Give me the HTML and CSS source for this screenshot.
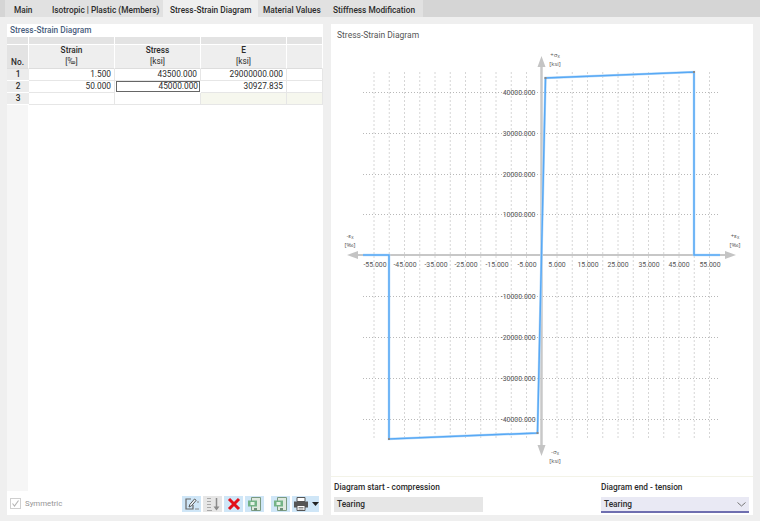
FILE: index.html
```html
<!DOCTYPE html>
<html lang="en">
<head>
    <meta charset="UTF-8">
    <title>Stress-Strain Diagram</title>
    <link rel="stylesheet" href="styles.css">
</head>
<body>
    <div class="tabs">
        <div class="tab tab-main">Main</div>
        <div class="tab tab-iso">Isotropic | Plastic (Members)</div>
        <div class="tab tab-diagram active">Stress-Strain Diagram</div>
        <div class="tab tab-values">Material Values</div>
        <div class="tab tab-stiff">Stiffness Modification</div>
    </div>

    <div class="content">
        <div class="panel left-panel">
            <div class="panel-title">Stress-Strain Diagram</div>
            <div class="grid">
                <div class="strip"></div><div class="strip"></div><div class="strip"></div><div class="strip"></div><div class="strip"></div>

                <div class="head no-head">No.</div>
                <div class="head"><span>Strain</span><span>[‰]</span></div>
                <div class="head"><span>Stress</span><span>[ksi]</span></div>
                <div class="head"><span>E</span><span>[ksi]</span></div>
                <div class="head"></div>

                <div class="no">1</div>
                <div class="cell">1.500</div>
                <div class="cell">43500.000</div>
                <div class="cell">29000000.000</div>
                <div class="cell"></div>

                <div class="no">2</div>
                <div class="cell">50.000</div>
                <div class="cell selected">45000.000</div>
                <div class="cell">30927.835</div>
                <div class="cell"></div>

                <div class="no">3</div>
                <div class="cell"></div>
                <div class="cell"></div>
                <div class="cell locked"></div>
                <div class="cell locked"></div>
            </div>
            <div class="no-rest"></div>
            <div class="footer">
                <label class="symmetric"><span class="checkbox"><svg width="9" height="9" viewBox="0 0 9 9"><path d="M1.500 4.500l2 2.500L7.500 1.500" fill="none" stroke="#b5b5b5" stroke-width="1.100"/></svg></span>Symmetric</label>
                <div class="tools">
                    <div class="tool"><svg width="16" height="16" viewBox="0 0 16 16"><path d="M7 3H2v10h7V9" fill="none" stroke="#666" stroke-width="1.200"/><path d="M5 11l.8-2.500L10.500 3l1.700 1.300-4.700 5.500z" fill="#eef6fc" stroke="#555"/><path d="M11 13h4M13 6h2" stroke="#888"/></svg></div>
                    <div class="tool off"><svg width="16" height="16" viewBox="0 0 16 16"><path d="M2 2.500h4M2 5.500h4M2 8.500h4M2 11.500h4M2 14.500h5" stroke="#a8a8a8" stroke-width="1.100"/><path d="M11.500 2v11" stroke="#8a8a8a" stroke-width="1.500"/><path d="M8.500 10.500l3 4 3-4z" fill="#8a8a8a"/></svg></div>
                    <div class="tool"><svg width="16" height="16" viewBox="0 0 16 16"><path d="M3 3l10 10M13 3L3 13" stroke="#e2101a" stroke-width="3"/></svg></div>
                    <div class="tool"><svg width="16" height="16" viewBox="0 0 16 16"><path d="M4.500 1.500h9v13h-9z" fill="#dfe9df" stroke="#7a9a80"/><path d="M1 4.500h9v6H1z" fill="#74b386"/><path d="M3.500 6h4v3h-4z" fill="#e4f2e6"/><path d="M7 12h3v2.500H7z" fill="#6f8f78"/></svg></div>
                    <div class="tool gap"><svg width="16" height="16" viewBox="0 0 16 16"><path d="M4.500 1.500h9v13h-9z" fill="#dfe9df" stroke="#7a9a80"/><path d="M1 4.500h9v6H1z" fill="#74b386"/><path d="M3.500 6h4v3h-4z" fill="#e4f2e6"/><path d="M7 12h3v2.500H7z" fill="#6f8f78"/></svg></div>
                    <div class="tool wide"><svg width="16" height="16" viewBox="0 0 16 16"><path d="M4 1.500h8v4H4z" fill="#fff" stroke="#555"/><path d="M1 5.500h14v6H1z" fill="#555"/><path d="M4 9.500h8v5H4z" fill="#fff" stroke="#555"/><path d="M5.500 11.500h5M5.500 13h5" stroke="#888"/></svg><svg class="caret" width="7" height="4" viewBox="0 0 7 4"><path d="M0 0h7L3.500 4z" fill="#222"/></svg></div>
                </div>
            </div>
        </div>

        <div class="right-col">
            <div class="panel chart-panel">
                <div class="chart-title">Stress-Strain Diagram</div>
                <svg class="chart" width="422" height="452" viewBox="331 24 422 452">
                    <g class="grid-v">
                        <path d="M374 72V440M389.250 72V440M404.500 72V440M419.750 72V440M435 72V440M450.250 72V440M465.500 72V440M480.750 72V440M496 72V440M511.250 72V440M526.500 72V440M557 72V440M572.250 72V440M587.500 72V440M602.750 72V440M618 72V440M633.250 72V440M648.500 72V440M663.750 72V440M679 72V440M694.250 72V440M709.500 72V440"/>
                    </g>
                    <g class="grid-h">
                        <path d="M363 92.500H720M363 133.500H720M363 174.500H720M363 214.500H720M363 296.500H720M363 337.500H720M363 378.500H720M363 419.500H720"/>
                    </g>
                    <g class="axis">
                        <path d="M541.500 64V448"/>
                        <path class="axis-thin" d="M356 255H727"/>
                        <path class="head-fill" d="M541.500 56l-4 11h8zM541.500 456l-4-11h8zM347 255l11-4v8zM736 255l-11-4v8z"/>
                    </g>
                    <path class="curve-glow" d="M363 255H389V439L537.500 433L545.500 78L694 72V255H720"/>
                    <path class="curve" d="M363 255H389V439L537.500 433L545.500 78L694 72V255H720"/>
                    <path class="vertex" d="M388 438h2v2h-2zM536.500 432h2v2h-2zM544.500 77h2v2h-2zM693 71h2v2h-2z"/>
                    <g class="ticks-x">
                        <text x="375" y="267">-55.000</text>
                        <text x="405" y="267">-45.000</text>
                        <text x="436" y="267">-35.000</text>
                        <text x="466" y="267">-25.000</text>
                        <text x="497" y="267">-15.000</text>
                        <text x="527" y="267">-5.000</text>
                        <text x="557" y="267">5.000</text>
                        <text x="588" y="267">15.000</text>
                        <text x="618" y="267">25.000</text>
                        <text x="649" y="267">35.000</text>
                        <text x="679" y="267">45.000</text>
                        <text x="710" y="267">55.000</text>
                    </g>
                    <g class="ticks-y">
                        <text x="535.500" y="95">40000.000</text>
                        <text x="535.500" y="136">30000.000</text>
                        <text x="535.500" y="177">20000.000</text>
                        <text x="535.500" y="217">10000.000</text>
                        <text x="535.500" y="299">-10000.000</text>
                        <text x="535.500" y="340">-20000.000</text>
                        <text x="535.500" y="381">-30000.000</text>
                        <text x="535.500" y="422">-40000.000</text>
                    </g>
                    <g class="axis-labels">
                        <text x="555" y="57">+σ<tspan class="sub" dy="1">x</tspan></text>
                        <text x="555" y="66">[ksi]</text>
                        <text x="555" y="454">-σ<tspan class="sub" dy="1">x</tspan></text>
                        <text x="555" y="463">[ksi]</text>
                        <text x="350" y="238">-ε<tspan class="sub" dy="1">x</tspan></text>
                        <text x="350" y="247">[‰]</text>
                        <text x="735" y="238">+ε<tspan class="sub" dy="1">x</tspan></text>
                        <text x="735" y="247">[‰]</text>
                    </g>
                </svg>
            </div>
            <div class="panel ends">
                <div class="end-field">
                    <div class="end-label">Diagram start - compression</div>
                    <div class="end-value">Tearing</div>
                </div>
                <div class="end-field end-right">
                    <div class="end-label">Diagram end - tension</div>
                    <div class="end-value select">Tearing<svg width="9" height="5" viewBox="0 0 9 5"><path d="M.5.500l4 3.500 4-3.500" fill="none" stroke="#777"/></svg></div>
                </div>
            </div>
        </div>
    </div>
</body>
</html>
```

FILE: styles.css
```css
* {
    box-sizing: border-box;
}

body {
    margin: 0;
    width: 760px;
    height: 521px;
    overflow: hidden;
    background-color: #efefef;
    color: #2b2b2b;
    font-family: Roboto, "Noto Sans", sans-serif;
    font-size: 8.3px;
}

.tabs {
    display: flex;
    height: 17px;
    background-color: #d5d5d5;
    padding-left: 5px;
}

.tab {
    height: 17px;
    padding-top: 3px;
    line-height: 14px;
    white-space: nowrap;
    background-color: #e1e1e1;
    font-weight: 500;
}

.tab-main {
    width: 42px;
    padding-left: 9px;
}

.tab-iso {
    width: 116px;
    padding-left: 5px;
}

.tab-diagram {
    width: 95px;
    padding-left: 7px;
}

.tab-values {
    width: 70px;
    padding-left: 5px;
}

.tab-stiff {
    width: 95px;
    padding-left: 5px;
}

.tab.active {
    background-color: #efefef;
    height: 24px;
}

.content {
    display: flex;
    gap: 8px;
    padding: 7px 7px 6px 7px;
    height: 504px;
}

.panel {
    background-color: #fff;
}

.left-panel {
    width: 316px;
    display: flex;
    flex-direction: column;
}

.panel-title {
    height: 13px;
    padding-left: 3px;
    line-height: 13px;
    color: #49607e;
    font-weight: 500;
}

.grid {
    display: grid;
    grid-template-columns: 22px 86px 86px 86px 36px;
    grid-template-rows: 8px 24px 12px 12px 12px;
}

.strip {
    background-color: #e3e3e3;
    border-right: 1px solid #fff;
    margin-bottom: 1px;
}

.head {
    background-color: #eeeeee;
    border-right: 1px solid #fff;
    border-bottom: 1px solid #ddd;
    display: flex;
    flex-direction: column;
    align-items: center;
    line-height: 11px;
    font-weight: 500;
}

.head span + span {
    font-weight: 400;
}

.no-head {
    justify-content: flex-end;
    background-color: #e3e3e3;
}

.no {
    background-color: #ececec;
    text-align: center;
    line-height: 11px;
    border-bottom: 1px solid #fff;
    font-weight: 500;
}

.cell {
    text-align: right;
    padding-right: 3px;
    line-height: 11px;
    border-right: 1px solid #e6e6e6;
    border-bottom: 1px solid #e6e6e6;
}

.cell.selected {
    border: 1px solid #666;
    margin: 0 1px 1px 1px;
    line-height: 9px;
    padding-right: 1px;
}

.cell.locked {
    background-color: #f6f7ee;
}

.no-rest {
    width: 21px;
    flex: 1;
    background-color: #f6f6f6;
}

.footer {
    height: 24px;
    display: flex;
    align-items: center;
    justify-content: space-between;
    padding: 1px 4px 0 3px;
}

.symmetric {
    display: flex;
    align-items: center;
    gap: 4px;
    color: #959595;
    font-size: 7.8px;
}

.checkbox {
    width: 11px;
    height: 11px;
    border: 1px solid #cfcfcf;
    display: flex;
    align-items: center;
    justify-content: center;
}

.tools {
    display: flex;
    gap: 2px;
}

.tool {
    width: 19px;
    height: 16px;
    background-color: #cfe6f7;
    display: flex;
    align-items: center;
    justify-content: center;
}

.tool.off {
    background-color: #e6e6e6;
}

.tool.gap {
    margin-left: 5px;
}

.tool.wide {
    width: 27px;
    gap: 3px;
    justify-content: flex-start;
    padding-left: 1px;
}

.right-col {
    width: 422px;
    display: flex;
    flex-direction: column;
}

.chart-panel {
    height: 453px;
    position: relative;
    border-bottom: 1px solid #f3f3e8;
}

.chart-title {
    position: absolute;
    top: 6px;
    left: 6px;
    color: #555;
    font-size: 8.5px;
}

.chart {
    display: block;
}

.grid-v path {
    fill: none;
    stroke: #d6d6d6;
    stroke-width: 1;
    stroke-dasharray: 2 2;
}

.grid-h path {
    fill: none;
    stroke: #b8b8b8;
    stroke-width: 1;
    stroke-dasharray: 1 2;
}

.axis path {
    fill: none;
    stroke: #c8c8c8;
    stroke-width: 2.500;
}

.axis .axis-thin {
    stroke: #b4b4b4;
    stroke-width: 1.500;
}

.axis .head-fill {
    fill: #c4c4c4;
    stroke: none;
}

.curve {
    fill: none;
    stroke: #58a9f5;
    stroke-width: 1.500;
}

.curve-glow {
    fill: none;
    stroke: #bcdcf9;
    stroke-width: 2.500;
}

.vertex {
    fill: #8a8a8a;
}

.chart text {
    font-family: Roboto, "Noto Sans", sans-serif;
    font-size: 6.900px;
    fill: #555;
}

.ticks-x text {
    text-anchor: middle;
}

.ticks-y text {
    text-anchor: end;
}

.chart .axis-labels text {
    font-family: "Open Sans", "Noto Sans", sans-serif;
    font-size: 6px;
    text-anchor: middle;
}

.chart .axis-labels .sub {
    font-size: 4.500px;
}

.ends {
    height: 38px;
    display: flex;
    justify-content: space-between;
    padding: 4px 4px 0 3px;
}

.end-field {
    width: 149px;
}

.end-right {
    width: 148px;
}

.end-label {
    line-height: 13px;
    margin-bottom: 3px;
    font-weight: 500;
}

.end-value {
    height: 15px;
    line-height: 15px;
    background-color: #e6e6e6;
    padding-left: 3px;
    font-weight: 500;
}

.end-value.select {
    height: 16px;
    display: flex;
    justify-content: space-between;
    align-items: center;
    background-color: #e9e9f4;
    border-bottom: 2px solid #6f6fb0;
    padding-right: 3px;
}
```
